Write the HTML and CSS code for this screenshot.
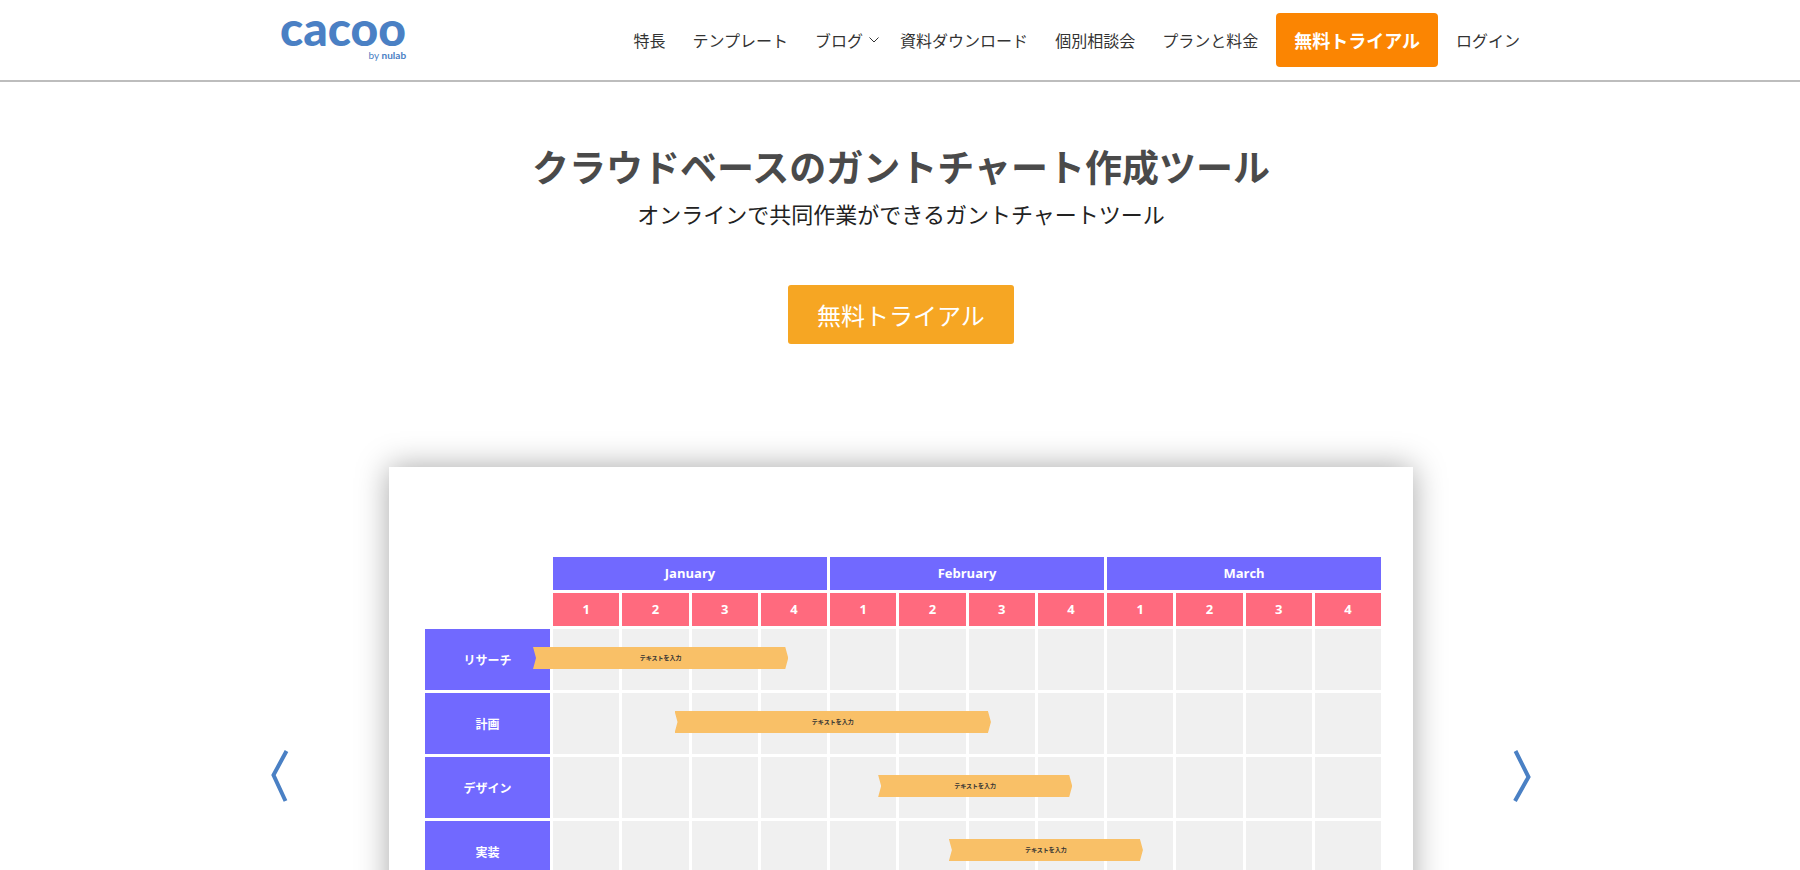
FILE: index.html
```html
<!DOCTYPE html>
<html lang="ja">
<head>
<meta charset="utf-8">
<meta name="viewport" content="width=device-width, initial-scale=1">
<title>Cacoo</title>
<link rel="stylesheet" href="styles.css">
</head>
<body>
<header class="site-header">
  <div class="header-inner">
    <a class="logo" href="#">
      <span class="logo-name">cacoo</span>
      <span class="logo-by">by <b>nulab</b></span>
    </a>
    <nav class="nav">
      <a href="#">特長</a>
      <a href="#">テンプレート</a>
      <a class="has-menu" href="#">ブログ<svg class="chevron" viewBox="0 0 10 6"><path d="M.5 .5 5 5 9.500 .5"/></svg></a>
      <a href="#">資料ダウンロード</a>
      <a href="#">個別相談会</a>
      <a href="#">プランと料金</a>
      <a class="nav-trial" href="#">無料トライアル</a>
      <a href="#">ログイン</a>
    </nav>
  </div>
</header>
<main class="main">
  <section class="hero">
    <h1 class="title">クラウドベースのガントチャート作成ツール</h1>
    <p class="subtitle">オンラインで共同作業ができるガントチャートツール</p>
    <a class="cta" href="#">無料トライアル</a>
  </section>
  <section class="carousel">
    <button class="arrow" type="button"><svg viewBox="0 0 18 54"><path d="M15.500 2 2.500 26 14.500 52"/></svg></button>
    <div class="slide">
      <table class="gantt">
        <colgroup><col class="label-col"><col span="12"></colgroup>
        <thead>
          <tr><td></td><th class="month" colspan="4">January</th><th class="month" colspan="4">February</th><th class="month" colspan="4">March</th></tr>
          <tr><td></td><th class="week">1</th><th class="week">2</th><th class="week">3</th><th class="week">4</th><th class="week">1</th><th class="week">2</th><th class="week">3</th><th class="week">4</th><th class="week">1</th><th class="week">2</th><th class="week">3</th><th class="week">4</th></tr>
        </thead>
        <tbody>
          <tr><th>リサーチ</th><td></td><td></td><td></td><td></td><td></td><td></td><td></td><td></td><td></td><td></td><td></td><td><span class="bar" style="left:11.3%;width:26.7%">テキストを入力</span></td></tr>
          <tr><th>計画</th><td></td><td></td><td></td><td></td><td></td><td></td><td></td><td></td><td></td><td></td><td></td><td><span class="bar" style="left:26.1%;width:33.1%">テキストを入力</span></td></tr>
          <tr><th>デザイン</th><td></td><td></td><td></td><td></td><td></td><td></td><td></td><td></td><td></td><td></td><td></td><td><span class="bar" style="left:47.4%;width:20.3%">テキストを入力</span></td></tr>
          <tr><th>実装</th><td></td><td></td><td></td><td></td><td></td><td></td><td></td><td></td><td></td><td></td><td></td><td><span class="bar" style="left:54.8%;width:20.3%">テキストを入力</span></td></tr>
        </tbody>
      </table>
    </div>
    <button class="arrow" type="button"><svg viewBox="0 0 18 54"><path d="M2.500 2 15.500 28 2 52"/></svg></button>
  </section>
</main>
</body>
</html>
```
FILE: styles.css
```css
* {
  box-sizing: border-box;
}

body {
  margin: 0;
  height: 100vh;
  overflow: hidden;
  background: #fff;
  color: #222;
  font-family: "Noto Sans CJK JP", sans-serif;
  font-size: 16px;
}

a {
  color: inherit;
  text-decoration: none;
}

.site-header {
  border-bottom: 2px solid #bdbdbd;
}

.header-inner {
  display: flex;
  justify-content: space-between;
  max-width: 1240px;
  height: 80px;
  margin: 0 auto;
}

.logo {
  display: flex;
  flex-direction: column;
  padding-top: 8px;
  color: #4a80c4;
  font-family: Lato, sans-serif;
}

.logo-name {
  font-size: 48px;
  font-weight: 900;
  line-height: 40px;
}

.logo-by {
  align-self: flex-end;
  font-size: 10px;
  line-height: 14px;
}

.nav {
  display: flex;
  align-items: center;
  gap: 27px;
  color: #333;
  white-space: nowrap;
}

.has-menu {
  display: flex;
  align-items: center;
  gap: 6px;
  margin-right: -6px;
}

.chevron {
  width: 10px;
  height: 6px;
  fill: none;
  stroke: #333;
}

.nav-trial {
  margin: 0 -9px;
  padding: 0 18px;
  border-radius: 4px;
  background: #fb8502;
  color: #fff;
  font-size: 18px;
  font-weight: 700;
  line-height: 54px;
}

.main {
  padding-left: 2px;
}

.hero {
  display: flex;
  flex-direction: column;
  align-items: center;
  padding: 57px 0 123px;
}

.title {
  margin: 0;
  color: #4a4a4a;
  font-size: 37px;
  font-weight: 700;
  line-height: 54px;
}

.subtitle {
  margin: 4px 0 55px;
  font-size: 22px;
  line-height: 33px;
}

.cta {
  padding: 0 29px;
  border-radius: 3px;
  background: #f6a623;
  color: #fff;
  font-size: 24px;
  line-height: 59px;
}

.carousel {
  display: flex;
  align-items: center;
  justify-content: space-between;
  max-width: 1260px;
  margin: 0 auto;
}

.arrow {
  width: 18px;
  height: 54px;
  padding: 0;
  border: 0;
  background: none;
}

.arrow svg {
  display: block;
  fill: none;
  stroke: #4a80c4;
  stroke-width: 4;
}

.slide {
  width: 1024px;
  padding: 87px 29px 200px 33px;
  background: #fff;
  box-shadow: 0 0 30px rgba(0, 0, 0, 0.35);
}

.gantt {
  width: 100%;
  table-layout: fixed;
  border-collapse: separate;
  border-spacing: 3px;
  color: #fff;
  font-size: 12px;
}

.label-col {
  width: 125px;
}

.gantt td,
.gantt th {
  padding: 0;
}

.gantt thead th {
  height: 33px;
  padding-bottom: 2px;
  font-family: "Open Sans", sans-serif;
  font-size: 13px;
  line-height: 18px;
}

.gantt .month {
  background: #7169ff;
}

.gantt .week {
  background: #ff6a7e;
}

.gantt tbody tr {
  position: relative;
}

.gantt tbody th {
  height: 61px;
  background: #7169ff;
}

.gantt tbody td {
  background: #f0f0f0;
}

.bar {
  position: absolute;
  top: 18px;
  background: #f9c067;
  clip-path: polygon(0 0, calc(100% - 3px) 0, 100% 50%, calc(100% - 3px) 100%, 0 100%, 3px 50%);
  color: #333;
  font-size: 6px;
  font-weight: 700;
  line-height: 22px;
  text-align: center;
}
```
